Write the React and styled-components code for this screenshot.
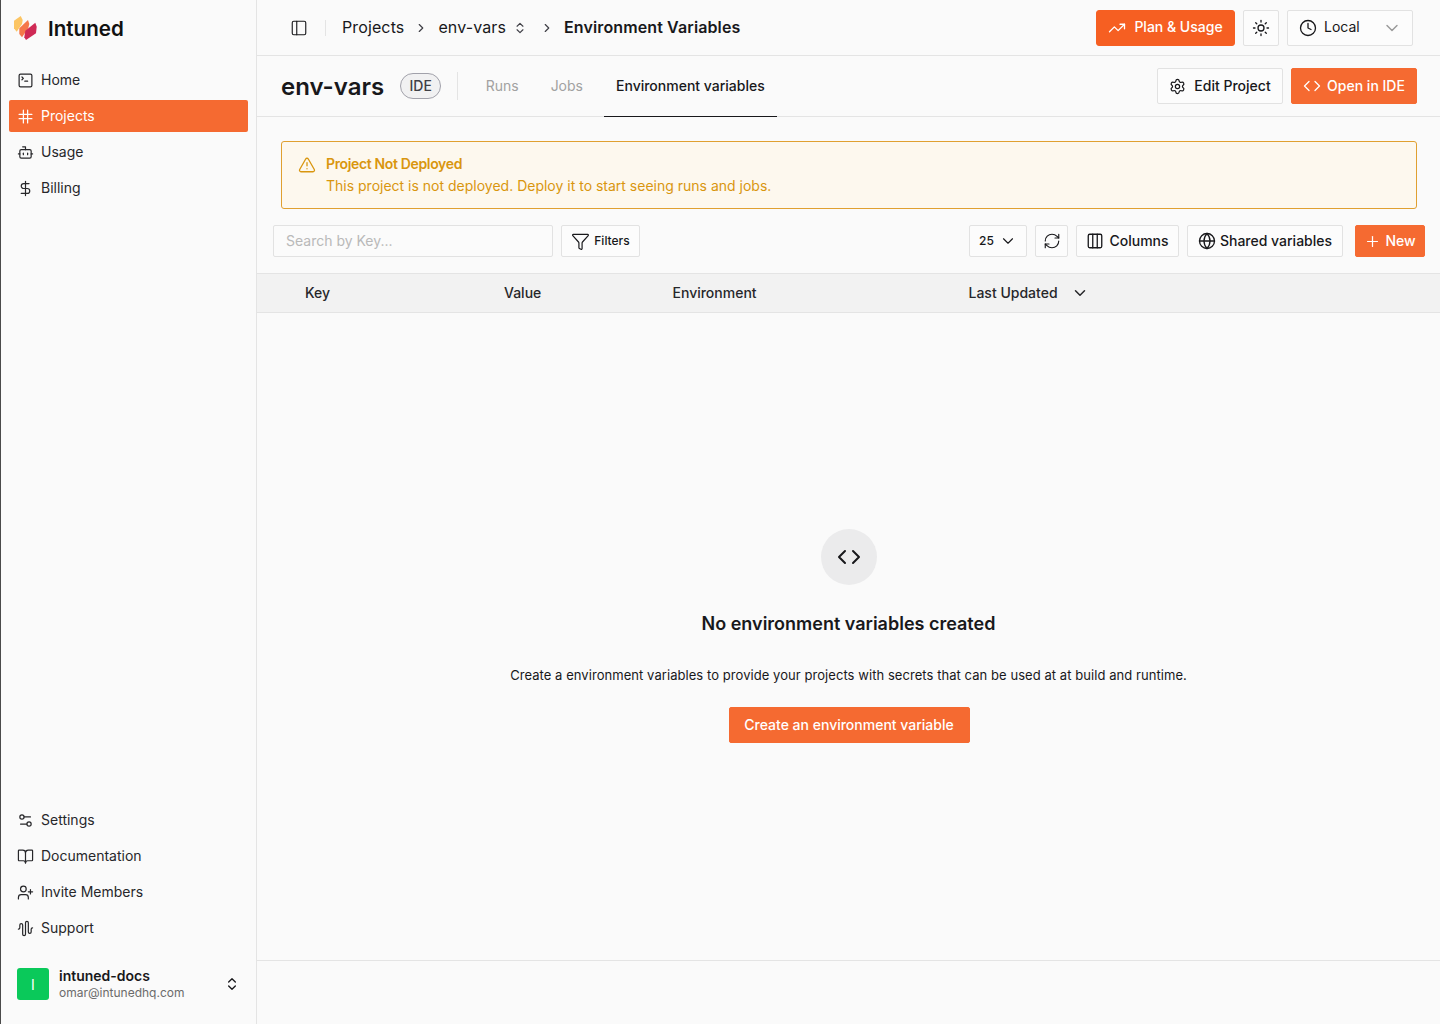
import React from "react";
import styled, { createGlobalStyle } from "styled-components";
import {
  AudioWaveform,
  BookOpen,
  Bot,
  ChevronDown,
  ChevronRight,
  ChevronsUpDown,
  Clock,
  Code,
  Columns3,
  DollarSign,
  Filter,
  Globe,
  PanelLeft,
  Plus,
  RefreshCw,
  Settings,
  Settings2,
  SquareTerminal,
  Sun,
  TrendingUp,
  TriangleAlert,
  UserPlus,
} from "lucide-react";

const orange = "#f56a31";
const line = "#e4e4e4";
const ink = "#18181b";

const GlobalStyle = createGlobalStyle`
  * { box-sizing: border-box; }
  html, body { margin: 0; padding: 0; background: #fafafa; }
  body { font-family: Inter, "Liberation Sans", sans-serif; color: ${ink}; }
`;

const Shell = styled.div`
  display: flex;
  width: 1440px;
  height: 1024px;
  overflow: hidden;
  background: #fafafa;
`;

const Label = styled.span`
  padding-bottom: 2px;
  white-space: nowrap;
`;

const Sidebar = styled.aside`
  width: 257px;
  flex: none;
  display: flex;
  flex-direction: column;
  border-left: 1px solid #4a4a4a;
  border-right: 1px solid ${line};
  padding: 0 8px;
`;

const Brand = styled.div`
  height: 64px;
  padding: 0 0 8px 1px;
  display: flex;
  align-items: center;
  gap: 6px;
  font-size: 20.6px;
  font-weight: 600;
  color: #111;
`;

const Nav = styled.nav`
  display: flex;
  flex-direction: column;
  gap: 4px;
`;

const NavItem = styled.a`
  height: 32px;
  display: flex;
  align-items: center;
  gap: 7px;
  padding: 0 8px;
  border-radius: 2px;
  font-size: 14px;
  color: ${(props) => (props.$active ? "#fff" : "#27272a")};
  background: ${(props) => (props.$active ? orange : "transparent")};
`;

const Spacer = styled.div`
  flex: 1;
`;

const Account = styled.div`
  height: 80px;
  display: flex;
  align-items: center;
  gap: 10px;
  padding: 0 8px;
`;

const Avatar = styled.div`
  width: 32px;
  height: 32px;
  border-radius: 3px;
  background: #0ac95a;
  color: #fff;
  font-size: 14px;
  font-weight: 400;
  display: flex;
  align-items: center;
  justify-content: center;
`;

const AccountText = styled.div`
  flex: 1;
  display: flex;
  flex-direction: column;
`;

const AccountName = styled.div`
  font-size: 14px;
  font-weight: 600;
  line-height: 17px;
`;

const AccountMail = styled.div`
  font-size: 12px;
  color: #6b6b6b;
  line-height: 17px;
`;

const Main = styled.main`
  flex: 1;
  min-width: 0;
  display: flex;
  flex-direction: column;
`;

const TopBar = styled.header`
  height: 56px;
  flex: none;
  display: flex;
  align-items: center;
  padding: 0 27px 0 33px;
  border-bottom: 1px solid ${line};
`;

const Divider = styled.span`
  width: 1px;
  height: 16px;
  background: ${line};
  margin: 0 16px 0 17px;
`;

const Crumb = styled.span`
  font-size: 16px;
  letter-spacing: 0.12px;
  padding-bottom: 2px;
  font-weight: ${(props) => (props.$strong ? 600 : 400)};
  color: ${ink};
`;

const CrumbSep = styled.span`
  display: flex;
  margin: 0 ${(props) => props.$r ?? 10}px 0 ${(props) => props.$l ?? 10}px;
  color: #3f3f46;
`;

const Actions = styled.div`
  margin-left: auto;
  display: flex;
  align-items: center;
  gap: 8px;
`;

const Button = styled.button`
  height: ${(props) => props.$h || 36}px;
  width: ${(props) => (props.$w ? `${props.$w}px` : "auto")};
  padding: 0;
  display: inline-flex;
  align-items: center;
  justify-content: center;
  gap: ${(props) => props.$gap || 8}px;
  font-family: inherit;
  font-size: ${(props) => props.$size || 14}px;
  font-weight: 500;
  border-radius: 2px;
  border: 1px solid ${(props) => (props.$primary ? orange : "#e2e2e2")};
  background: ${(props) => (props.$primary ? orange : "#fcfcfc")};
  color: ${(props) => (props.$primary ? "#fff" : ink)};
`;

const PlanButton = styled(Button)`
  background: #f65f22;
  border-color: #f65f22;
  border-radius: 3px;
`;

const EnvSelect = styled(Button)`
  width: 126px;
  justify-content: flex-start;
  font-weight: 400;
  gap: 7px;
  padding: 0 10px 0 11px;
`;

const EnvCaret = styled.span`
  display: flex;
  margin-left: auto;
  color: #9a9a9a;
`;

const ProjectBar = styled.div`
  height: 61px;
  flex: none;
  display: flex;
  align-items: stretch;
  padding: 0 23px 0 24px;
  border-bottom: 1px solid ${line};
`;

const ProjectTitle = styled.h1`
  margin: 0;
  align-self: center;
  font-size: 24px;
  font-weight: 600;
  color: ${ink};
`;

const Badge = styled.span`
  align-self: center;
  margin-left: 16px;
  width: 41px;
  height: 26px;
  border-radius: 13px;
  border: 1px solid #a1a1aa;
  background: #f1f1f2;
  font-size: 14px;
  font-weight: 500;
  color: #3f3f46;
  display: flex;
  align-items: center;
  justify-content: center;
`;

const BarRule = styled.span`
  align-self: center;
  width: 1px;
  height: 28px;
  margin: 0 16px 0 15.5px;
  background: ${line};
`;

const Tab = styled.a`
  display: flex;
  align-items: center;
  padding: 0 12px 2px;
  margin-left: ${(props) => props.$ml || 0}px;
  margin-bottom: -1px;
  font-size: 14px;
  font-weight: ${(props) => (props.$active ? 500 : 400)};
  color: ${(props) => (props.$active ? ink : "#a1a1a1")};
  border-bottom: 1px solid ${(props) => (props.$active ? ink : "transparent")};
`;

const Banner = styled.div`
  flex: none;
  margin: 24px 23px 16px 24px;
  height: 68px;
  display: flex;
  align-items: flex-start;
  gap: 10px;
  padding: 11px 16px;
  background: #fdf8ee;
  border: 1px solid #e0a030;
  border-radius: 3px;
  color: #d9960f;
`;

const BannerIcon = styled.span`
  display: flex;
  margin-top: 3px;
`;

const BannerTitle = styled.div`
  font-size: 14px;
  font-weight: 600;
  letter-spacing: -0.35px;
  line-height: 22px;
`;

const BannerBody = styled.div`
  font-size: 14px;
  line-height: 22px;
`;

const Toolbar = styled.div`
  flex: none;
  height: 32px;
  margin: 0 15px 16px 16px;
  display: flex;
  align-items: stretch;
  gap: 8px;
`;

const SearchBox = styled.input`
  width: 280px;
  padding: 0 12px 2px;
  font-family: inherit;
  font-size: 14px;
  border-radius: 2px;
  border: 1px solid #e2e2e2;
  background: #fbfbfb;
  &::placeholder { color: #b9b9b9; }
`;

const ToolGroup = styled.div`
  margin-left: auto;
  display: flex;
  gap: 8px;
`;

const NewButton = styled(Button)`
  margin-left: 4px;
`;

const TableHead = styled.div`
  flex: none;
  height: 40px;
  display: grid;
  grid-template-columns: 199px 168.5px 296px 1fr;
  align-items: center;
  padding-left: 48px;
  background: #f2f2f2;
  border-top: 1px solid ${line};
  border-bottom: 1px solid ${line};
  font-size: 14px;
  font-weight: 500;
  color: #27272a;
`;

const HeadCell = styled.div`
  display: flex;
  align-items: center;
  gap: 13px;
`;

const Empty = styled.section`
  height: 648px;
  flex: none;
  border-bottom: 1px solid ${line};
  display: flex;
  flex-direction: column;
  align-items: center;
  padding-top: 216px;
`;

const EmptyIcon = styled.div`
  width: 56px;
  height: 56px;
  border-radius: 50%;
  background: #ebebec;
  display: flex;
  align-items: center;
  justify-content: center;
`;

const EmptyTitle = styled.h2`
  margin: 27px 0 0;
  font-size: 18px;
  line-height: 24px;
  font-weight: 600;
  color: ${ink};
`;

const EmptyText = styled.p`
  margin: 29px 0 0;
  font-size: 13px;
  letter-spacing: 0.06px;
  line-height: 20px;
  color: ${ink};
`;

const EmptyButton = styled(Button)`
  margin: 22px 0 0 1px;
  width: 241px;
`;

const Logo = () => (
  <svg width="32" height="32" viewBox="0 0 32 32">
    <path d="M4 8.7 10.7 4l2 4-.7 4-5.3 7.7L4 16.3z" fill="#fcc563" />
    <path d="M9.3 16.3 18 8l1.3 4-1 4.3L12 25.3 9.3 22z" fill="#f5784a" />
    <path d="M15.3 18.7 25.3 10.7l1.4 4-.7 6.6L16 28l-1.7-2.7z" fill="#cf2a55" />
  </svg>
);

// lucide's hash is slanted, the one in the nav has straight bars
const StraightHash = ({ size }) => (
  <svg width={size} height={size} viewBox="0 0 24 24" fill="none" stroke="currentColor" strokeWidth="1.75" strokeLinecap="round">
    <path d="M3 9h18M3 15h18M9 3v18M15 3v18" />
  </svg>
);

const navTop = [
  { label: "Home", Icon: SquareTerminal },
  { label: "Projects", Icon: StraightHash, active: true },
  { label: "Usage", Icon: Bot },
  { label: "Billing", Icon: DollarSign },
];

const navBottom = [
  { label: "Settings", Icon: Settings2 },
  { label: "Documentation", Icon: BookOpen },
  { label: "Invite Members", Icon: UserPlus },
  { label: "Support", Icon: AudioWaveform },
];

const NavList = ({ items }) => (
  <Nav>
    {items.map(({ label, Icon, active }) => (
      <NavItem key={label} $active={active}>
        <Icon size={17} strokeWidth={1.7} />
        <Label>{label}</Label>
      </NavItem>
    ))}
  </Nav>
);

export default function App() {
  return (
    <Shell>
      <GlobalStyle />
      <Sidebar>
        <Brand>
          <Logo />
          Intuned
        </Brand>
        <NavList items={navTop} />
        <Spacer />
        <NavList items={navBottom} />
        <Account>
          <Avatar>I</Avatar>
          <AccountText>
            <AccountName>intuned-docs</AccountName>
            <AccountMail>omar@intunedhq.com</AccountMail>
          </AccountText>
          <ChevronsUpDown size={16} />
        </Account>
      </Sidebar>
      <Main>
        <TopBar>
          <PanelLeft size={18} strokeWidth={1.5} />
          <Divider />
          <Crumb>Projects</Crumb>
          <CrumbSep><ChevronRight size={14} /></CrumbSep>
          <Crumb>env-vars</Crumb>
          <CrumbSep $l={7} $r={3}><ChevronsUpDown size={14} /></CrumbSep>
          <CrumbSep><ChevronRight size={14} /></CrumbSep>
          <Crumb $strong>Environment Variables</Crumb>
          <Actions>
            <PlanButton $primary $w={139}>
              <TrendingUp size={18} strokeWidth={1.75} />
              <Label>Plan &amp; Usage</Label>
            </PlanButton>
            <Button $w={36}><Sun size={18} strokeWidth={1.75} /></Button>
            <EnvSelect>
              <Clock size={18} strokeWidth={1.75} />
              <Label>Local</Label>
              <EnvCaret><ChevronDown size={20} strokeWidth={1.75} /></EnvCaret>
            </EnvSelect>
          </Actions>
        </TopBar>
        <ProjectBar>
          <ProjectTitle>env-vars</ProjectTitle>
          <Badge><Label>IDE</Label></Badge>
          <BarRule />
          <Tab>Runs</Tab>
          <Tab $ml={8}>Jobs</Tab>
          <Tab $ml={9} $active>Environment variables</Tab>
          <Actions>
            <Button $w={126}>
              <Settings size={17} strokeWidth={1.75} />
              <Label>Edit Project</Label>
            </Button>
            <Button $primary $w={126} $gap={6}>
              <Code size={18} strokeWidth={1.75} />
              <Label>Open in IDE</Label>
            </Button>
          </Actions>
        </ProjectBar>
        <Banner>
          <BannerIcon><TriangleAlert size={18} strokeWidth={1.75} /></BannerIcon>
          <div>
            <BannerTitle>Project Not Deployed</BannerTitle>
            <BannerBody>This project is not deployed. Deploy it to start seeing runs and jobs.</BannerBody>
          </div>
        </Banner>
        <Toolbar>
          <SearchBox placeholder="Search by Key..." />
          <Button $h={32} $size={12} $w={79} $gap={4}>
            <Filter size={19} strokeWidth={1.5} />
            <Label>Filters</Label>
          </Button>
          <ToolGroup>
            <Button $h={32} $size={12} $w={58} $gap={5}>
              <Label>25</Label>
              <ChevronDown size={18} strokeWidth={1.5} />
            </Button>
            <Button $h={32} $w={33}><RefreshCw size={18} strokeWidth={1.5} /></Button>
            <Button $h={32} $w={103} $gap={5}>
              <Columns3 size={18} strokeWidth={1.75} />
              <Label>Columns</Label>
            </Button>
            <Button $h={32} $w={156} $gap={4}>
              <Globe size={18} strokeWidth={1.75} />
              <Label>Shared variables</Label>
            </Button>
            <NewButton $h={32} $primary $w={70} $gap={4}>
              <Plus size={17} strokeWidth={1.75} />
              <Label>New</Label>
            </NewButton>
          </ToolGroup>
        </Toolbar>
        <TableHead>
          <HeadCell><Label>Key</Label></HeadCell>
          <HeadCell><Label>Value</Label></HeadCell>
          <HeadCell><Label>Environment</Label></HeadCell>
          <HeadCell>
            <Label>Last Updated</Label>
            <ChevronDown size={18} />
          </HeadCell>
        </TableHead>
        <Empty>
          <EmptyIcon><Code size={24} strokeWidth={2} /></EmptyIcon>
          <EmptyTitle>No environment variables created</EmptyTitle>
          <EmptyText>Create a environment variables to provide your projects with secrets that can be used at at build and runtime.</EmptyText>
          <EmptyButton $primary><Label>Create an environment variable</Label></EmptyButton>
        </Empty>
      </Main>
    </Shell>
  );
}
